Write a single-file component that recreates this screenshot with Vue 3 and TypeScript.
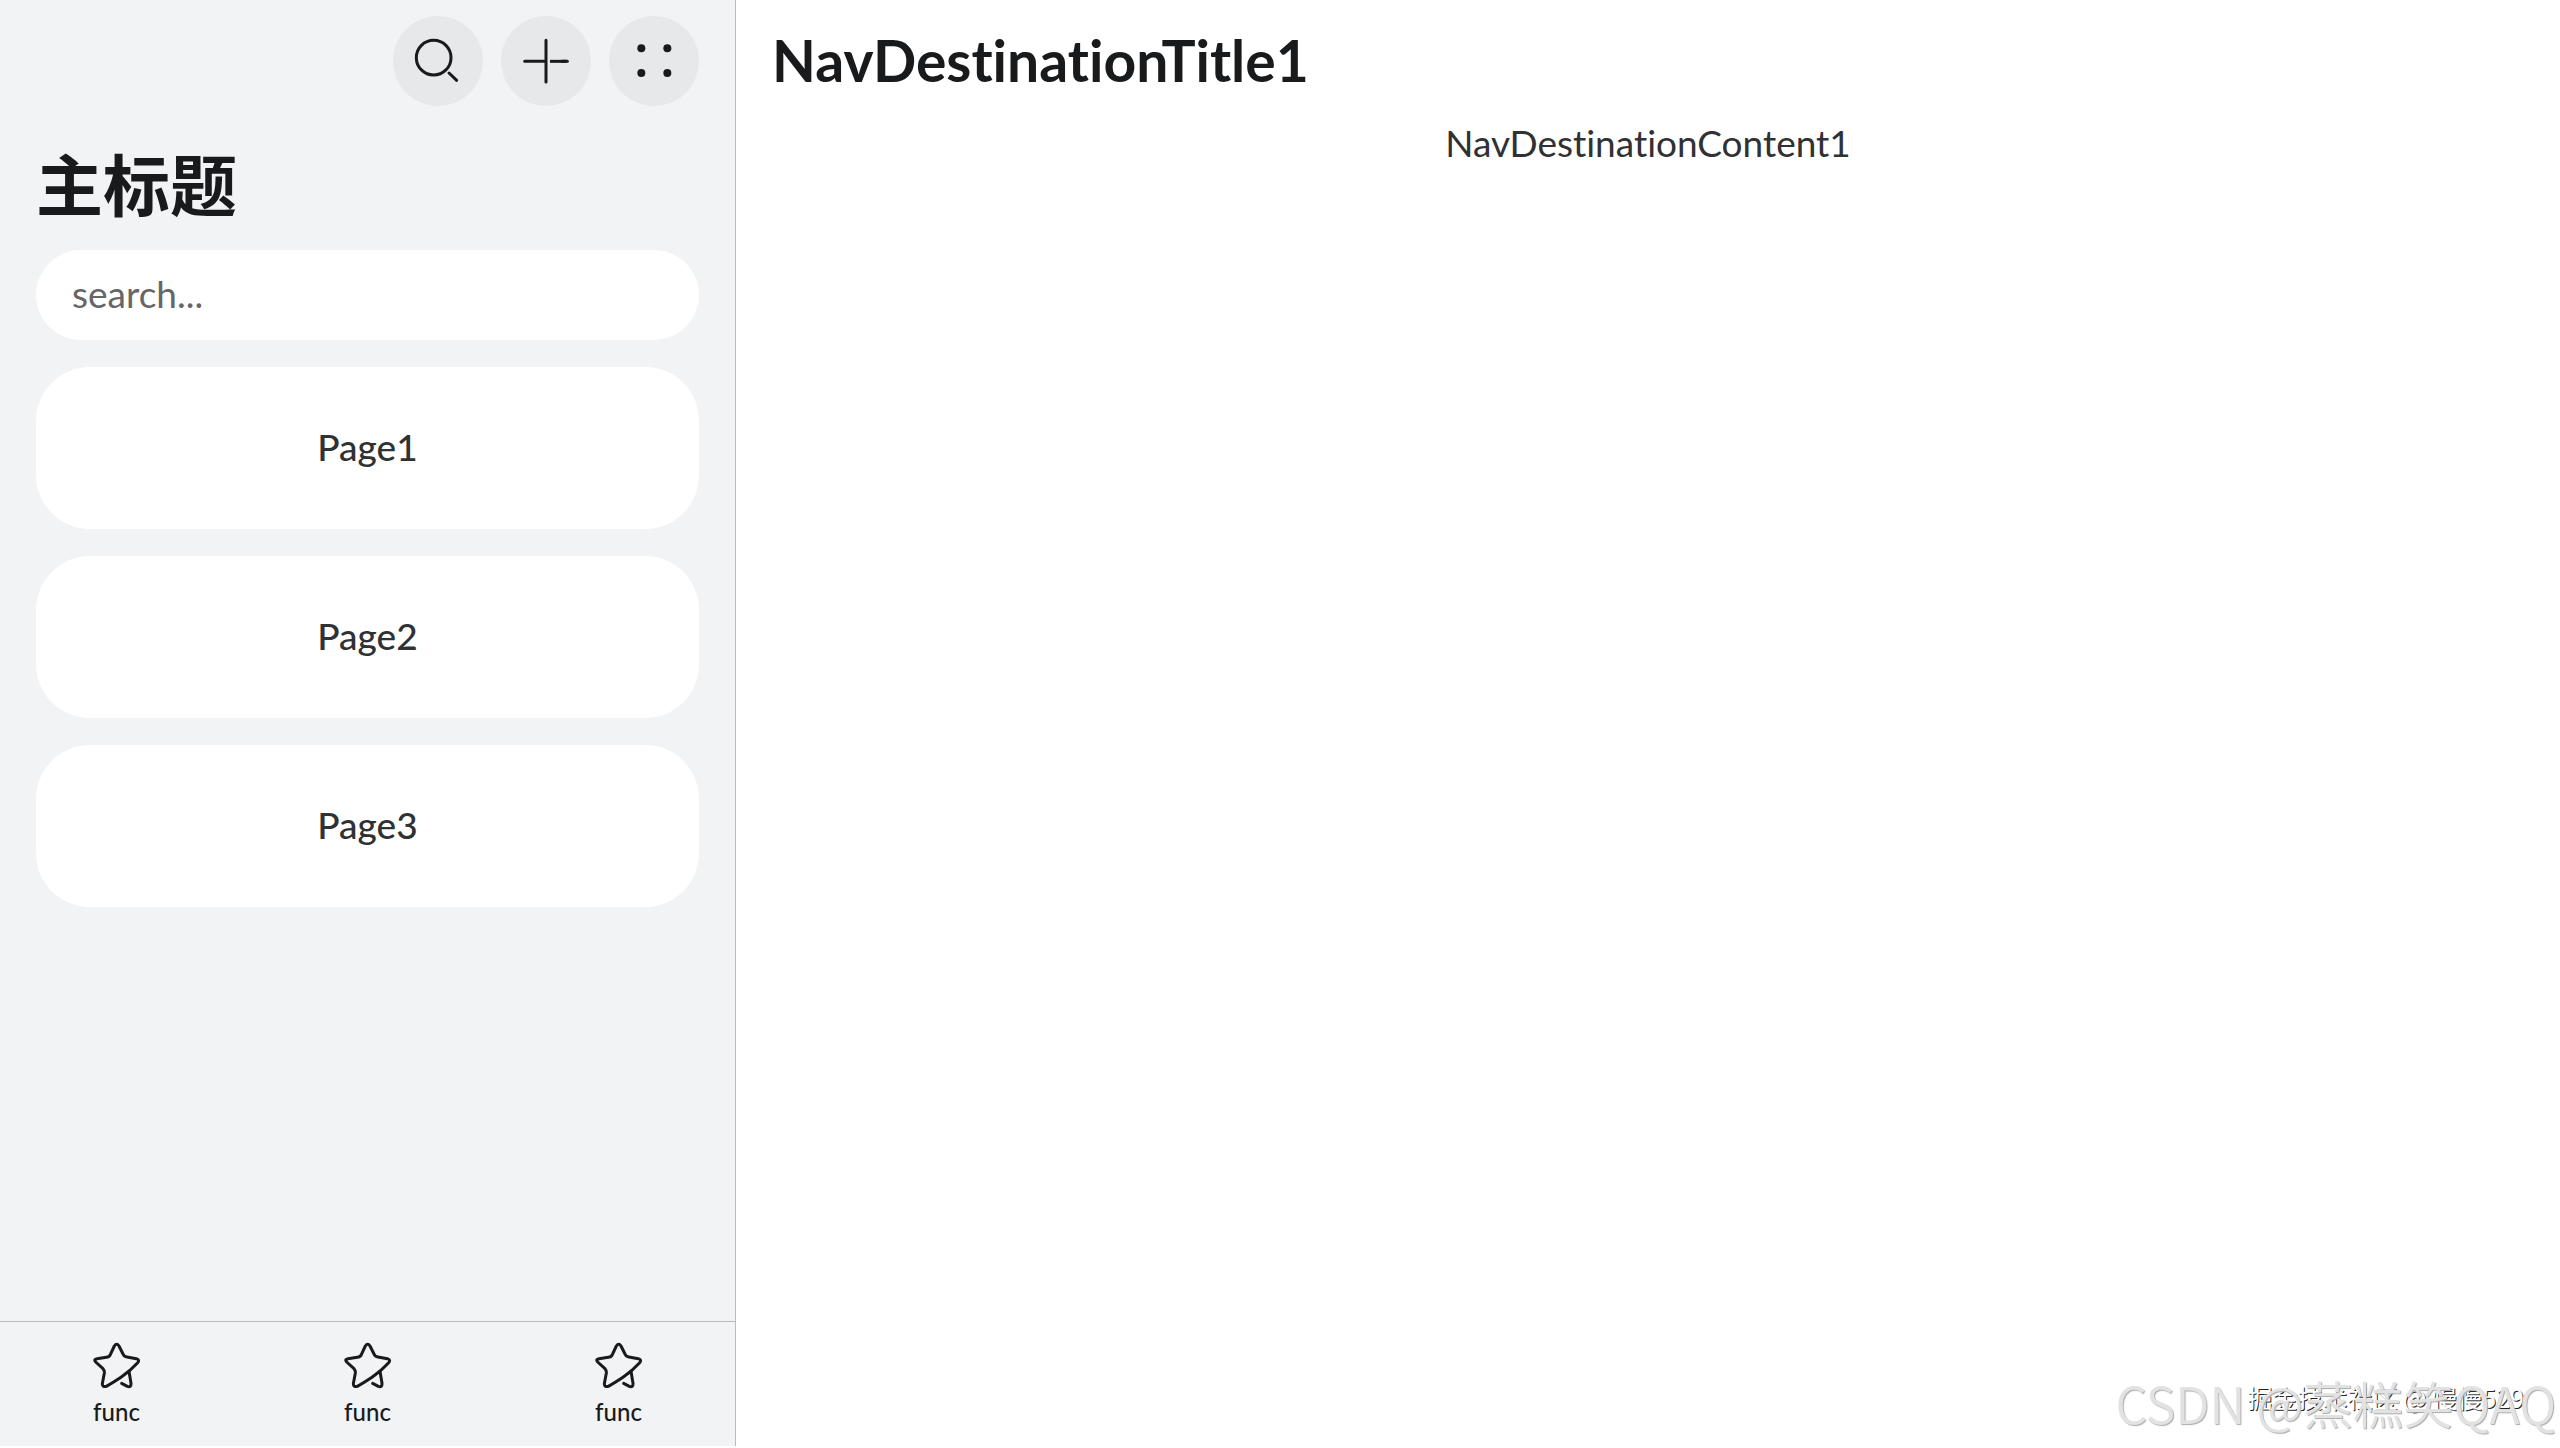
<script setup lang="ts">
import { ref } from 'vue'

interface Page {
  id: number
  label: string
}

const pages: Page[] = [1, 2, 3].map((id) => ({ id, label: `Page${id}` }))
const tools: string[] = ['func', 'func', 'func']

const keyword = ref('')
const current = ref(1)
</script>

<template>
  <div class="layout">
    <aside class="sidebar">
      <header class="actions">
        <button class="round" type="button" aria-label="Search">
          <svg viewBox="0 0 144 144">
            <circle cx="59" cy="62" r="52" />
            <path d="M105 108L128 130" />
          </svg>
        </button>
        <button class="round" type="button" aria-label="Add">
          <svg viewBox="0 0 144 144">
            <path d="M72 10V135M8 73H72" />
            <path class="butt" d="M84 73H134" />
            <path d="M120 73H136" />
          </svg>
        </button>
        <button class="round" type="button" aria-label="More">
          <svg class="dots" viewBox="0 0 144 144">
            <circle cx="34" cy="34" r="12" />
            <circle cx="112" cy="34" r="12" />
            <circle cx="34" cy="108" r="12" />
            <circle cx="112" cy="108" r="12" />
          </svg>
        </button>
      </header>

      <h1 class="title">主标题</h1>

      <input
        v-model="keyword"
        class="search"
        type="text"
        placeholder="search..."
        aria-label="search"
      />

      <nav class="pages">
        <button
          v-for="page in pages"
          :key="page.id"
          class="card"
          type="button"
          @click="current = page.id"
        >
          {{ page.label }}
        </button>
      </nav>

      <footer class="toolbar">
        <button v-for="(tool, i) in tools" :key="i" class="tool" type="button">
          <svg viewBox="0 0 144 144">
            <path
              d="M64 12Q71 2 78 12L90 36Q93 44 102 45L130 50Q141 53 134 62Q112 86 84 106Q62 121 40 133Q28 136 28 125L34 93Q35 86 30 80L8 60Q1 52 12 50L40 46Q49 45 52 38Z"
            />
            <path d="M108 88L114 124Q115 137 103 133L86 124" />
          </svg>
          <span>{{ tool }}</span>
        </button>
      </footer>
    </aside>

    <main class="detail">
      <h2 class="detail-title">NavDestinationTitle{{ current }}</h2>
      <p class="detail-content">NavDestinationContent{{ current }}</p>
    </main>

    <div class="mark community">掘金技术社区 @ 慢慢529</div>
    <div class="mark author">CSDN @蒸糕笑QAQ</div>
  </div>
</template>

<style>
body {
  margin: 0;
  background: #fff;
}
</style>

<style scoped>
.layout {
  position: relative;
  display: flex;
  box-sizing: border-box;
  min-height: 100vh;
  padding-bottom: 2px;
  overflow: hidden;
  color: #191a1c;
  font-family: Lato, "Noto Sans CJK SC", sans-serif;
  font-variant-ligatures: none;
}

button,
input {
  box-sizing: border-box;
  margin: 0;
  padding: 0;
  border: 0;
  color: inherit;
  font-family: inherit;
}

.sidebar {
  display: flex;
  flex: 0 0 28.75%;
  flex-direction: column;
  box-sizing: border-box;
  border-right: 1px solid #b9bbbe;
  background: #f1f3f5;
}

.actions {
  display: flex;
  justify-content: flex-end;
  gap: 18px;
  padding: 16px 36px 0;
}

.round {
  display: grid;
  width: 90px;
  height: 90px;
  place-items: center;
  border-radius: 50%;
  background: #e6e8ea;
}

svg {
  display: block;
  width: 48px;
  height: 48px;
  fill: none;
  stroke: #191a1c;
  stroke-width: 9;
  stroke-linecap: round;
  stroke-linejoin: round;
}

.butt {
  stroke-linecap: butt;
}

.dots {
  fill: #191a1c;
  stroke: none;
}

.title {
  margin: 31px 36px 23px;
  font-family: "Noto Sans CJK SC", sans-serif;
  font-size: 67px;
  font-weight: 700;
  line-height: 90px;
}

.search {
  height: 90px;
  margin: 0 36px;
  padding: 0 36px 4px;
  border-radius: 45px;
  background: #fff;
  font-size: 37px;
  outline: none;
}

.search::placeholder {
  color: #666;
  opacity: 1;
}

.pages {
  display: flex;
  flex: 1;
  flex-direction: column;
  gap: 27px;
  padding: 27px 36px;
}

.card {
  height: 162px;
  padding-bottom: 4px;
  border-radius: 54px;
  background: #fff;
  color: #303133;
  font-size: 37px;
  font-weight: 500;
}

.toolbar {
  display: grid;
  grid-template-columns: repeat(3, 1fr);
  column-gap: 18px;
  height: 124px;
  border-top: 1px solid #b9bbbe;
}

.tool {
  display: flex;
  flex-direction: column;
  align-items: center;
  gap: 8px;
  padding-top: 20px;
  background: none;
  font-size: 24px;
  font-weight: 500;
  line-height: 28px;
}

.detail {
  flex: 1;
  padding: 0 36px;
}

.detail-title {
  margin: 15px 0 0;
  font-size: 57px;
  font-weight: 700;
  line-height: 90px;
}

.detail-content {
  margin: 16px 0 0;
  color: #303133;
  font-size: 37px;
  line-height: 44px;
  text-align: center;
}

.mark {
  position: absolute;
  font-family: "Noto Sans CJK SC", sans-serif;
  white-space: nowrap;
  opacity: 0.99;
}

.community {
  right: 36px;
  bottom: 35px;
  color: #fff;
  font-size: 25px;
  line-height: 32px;
  text-shadow: 1px 1px 0 #222;
}

.author {
  right: 4px;
  bottom: 16px;
  color: #e2e2e2;
  font-size: 50px;
  font-weight: 350;
  line-height: 60px;
  text-shadow: 1px 1px 1px #aaa;
}
</style>
